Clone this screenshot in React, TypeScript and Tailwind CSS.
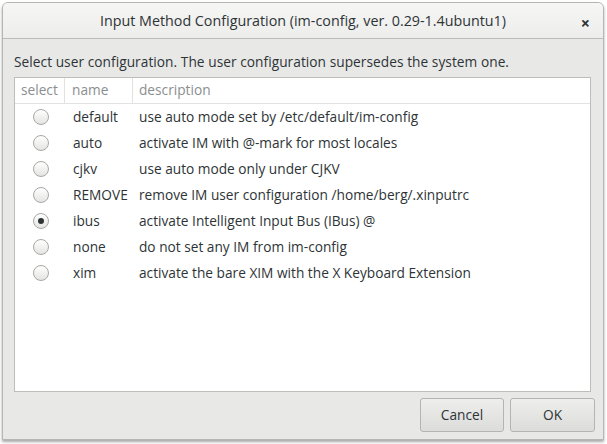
const rows = [
  { name: "default", desc: "use auto mode set by /etc/default/im-config", on: false },
  { name: "auto", desc: "activate IM with @-mark for most locales", on: false },
  { name: "cjkv", desc: "use auto mode only under CJKV", on: false },
  { name: "REMOVE", desc: "remove IM user configuration /home/berg/.xinputrc", on: false },
  { name: "ibus", desc: "activate Intelligent Input Bus (IBus) @", on: true },
  { name: "none", desc: "do not set any IM from im-config", on: false },
  { name: "xim", desc: "activate the bare XIM with the X Keyboard Extension", on: false },
];

function Radio({ on }: { on: boolean }) {
  return (
    <div className="w-[16px] h-[16px] rounded-full border border-[#a8a8a6] bg-gradient-to-b from-[#ffffff] to-[#e4e4e2] flex items-center justify-center shadow-[0_1px_0_rgba(255,255,255,0.8)]">
      {on && <div className="w-[6px] h-[6px] rounded-full bg-[#2e3436]" />}
    </div>
  );
}

export default function App() {
  return (
    <div className="w-[607px] h-[444px] bg-white p-[2px] pr-[3px] pb-[4px] text-[#2e3436] text-[13.7px]" style={{ fontFamily: '"Open Sans", "Noto Sans", sans-serif' }}>
      <div className="h-full flex flex-col rounded-t-[6px] border border-[#b6b6b3] bg-[#e8e8e7] shadow-[0_2px_3px_rgba(0,0,0,0.35)] overflow-hidden">
        {/* title bar */}
        <div className="h-[36px] shrink-0 flex items-center justify-center relative bg-gradient-to-b from-[#f6f6f5] to-[#ededec] border-b border-[#bcbcb9]">
          <span className="text-[14.3px] text-[#2e3436] font-medium">Input Method Configuration (im-config, ver. 0.29-1.4ubuntu1)</span>
          <span className="absolute right-[13px] top-[8px] text-[16px] font-bold text-[#2e3436]">×</span>
        </div>

        <div className="flex-1 flex flex-col pl-[11px] pr-[12px] pt-[14px]">
          <p className="leading-[18px] mb-[6px] tracking-[0.05px]">Select user configuration. The user configuration supersedes the system one.</p>

          <div className="h-[315px] bg-white border border-[#bdbdba] flex flex-col">
            <div className="h-[26px] flex items-center border-b border-[#e2e2e0] text-[#8b8e8f]">
              <div className="w-[50px] h-full flex items-center pl-[6px] border-r border-[#e2e2e0]">select</div>
              <div className="w-[68px] h-full flex items-center pl-[7px] border-r border-[#e2e2e0]">name</div>
              <div className="flex-1 h-full flex items-center pl-[6px]">description</div>
            </div>
            {rows.map((r) => (
              <div key={r.name} className="h-[26px] flex items-center">
                <div className="w-[50px] flex justify-center pl-[2px]">
                  <Radio on={r.on} />
                </div>
                <div className="w-[69px] pl-[8px]">{r.name}</div>
                <div className="flex-1 pl-[5px]">{r.desc}</div>
              </div>
            ))}
          </div>

          <div className="flex justify-end gap-[6px] mt-[6px] -mr-[4px]">
            <button className="w-[84px] h-[34px] rounded-[3px] border border-[#b4b4b1] bg-gradient-to-b from-[#eeeeec] to-[#dcdcda] text-[#2e3436]">Cancel</button>
            <button className="w-[85px] h-[34px] rounded-[3px] border border-[#b4b4b1] bg-gradient-to-b from-[#eeeeec] to-[#dcdcda] text-[#2e3436]">OK</button>
          </div>
        </div>
      </div>
    </div>
  );
}
